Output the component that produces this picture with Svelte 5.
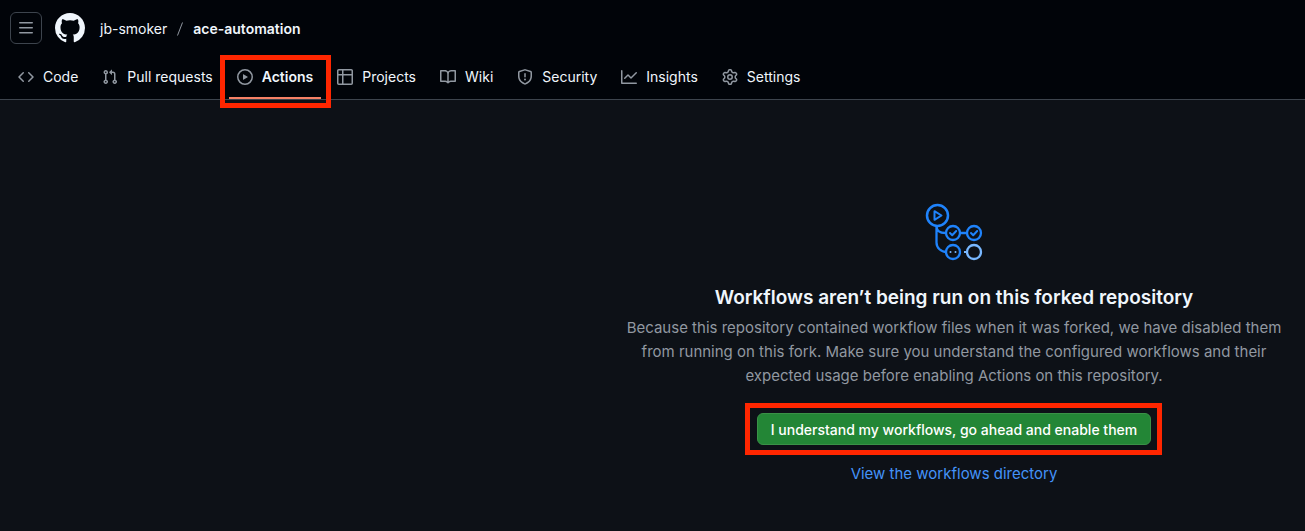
<script>
  const tabs = [
    { name: 'Code', icon: 'm11.28 3.22 4.25 4.25a.75.75 0 0 1 0 1.06l-4.25 4.25a.749.749 0 0 1-1.275-.326.749.749 0 0 1 .215-.734L13.94 8l-3.72-3.72a.749.749 0 0 1 .326-1.275.749.749 0 0 1 .734.215Zm-6.56 0a.751.751 0 0 1 1.042.018.751.751 0 0 1 .018 1.042L2.06 8l3.72 3.72a.749.749 0 0 1-.326 1.275.749.749 0 0 1-.734-.215L.47 8.53a.75.75 0 0 1 0-1.06Z' },
    { name: 'Pull requests', icon: 'M1.5 3.25a2.25 2.25 0 1 1 3 2.122v5.256a2.251 2.251 0 1 1-1.5 0V5.372A2.25 2.25 0 0 1 1.5 3.25Zm5.677-.177L9.573.677A.25.25 0 0 1 10 .854V2.5h1A2.5 2.5 0 0 1 13.5 5v5.628a2.251 2.251 0 1 1-1.5 0V5a1 1 0 0 0-1-1h-1v1.646a.25.25 0 0 1-.427.177L7.177 3.427a.25.25 0 0 1 0-.354ZM3.75 2.5a.75.75 0 1 0 0 1.5.75.75 0 0 0 0-1.5Zm0 9.5a.75.75 0 1 0 0 1.5.75.75 0 0 0 0-1.5Zm8.25.75a.75.75 0 1 0 1.5 0 .75.75 0 0 0-1.5 0Z' },
    { name: 'Actions', current: true, icon: 'M8 0a8 8 0 1 1 0 16A8 8 0 0 1 8 0ZM1.5 8a6.5 6.5 0 1 0 13 0 6.5 6.5 0 0 0-13 0Zm4.879-2.773 4.264 2.559a.25.25 0 0 1 0 .428l-4.264 2.559A.25.25 0 0 1 6 10.559V5.442a.25.25 0 0 1 .379-.215Z' },
    { name: 'Projects', icon: 'M0 1.75C0 .784.784 0 1.75 0h12.5C15.216 0 16 .784 16 1.75v12.5A1.75 1.75 0 0 1 14.25 16H1.75A1.75 1.75 0 0 1 0 14.25ZM6.5 6.5v8h7.75a.25.25 0 0 0 .25-.25V6.5Zm8-1.5V1.75a.25.25 0 0 0-.25-.25H6.5V5Zm-13 1.5v7.75c0 .138.112.25.25.25H5v-8ZM5 5V1.5H1.75a.25.25 0 0 0-.25.25V5Z' },
    { name: 'Wiki', icon: 'M0 1.75A.75.75 0 0 1 .75 1h4.253c1.227 0 2.317.59 3 1.501A3.743 3.743 0 0 1 11.006 1h4.245a.75.75 0 0 1 .75.75v10.5a.75.75 0 0 1-.75.75h-4.507a2.25 2.25 0 0 0-1.591.659l-.622.621a.75.75 0 0 1-1.06 0l-.622-.621A2.25 2.25 0 0 0 5.258 13H.75a.75.75 0 0 1-.75-.75Zm7.251 10.324.004-5.073-.002-2.253A2.25 2.25 0 0 0 5.003 2.5H1.5v9h3.757a3.75 3.75 0 0 1 1.994.574ZM8.755 4.75l-.004 7.322a3.752 3.752 0 0 1 1.992-.572H14.5v-9h-3.495a2.25 2.25 0 0 0-2.25 2.25Z' },
    { name: 'Security', icon: 'M7.467.133a1.748 1.748 0 0 1 1.066 0l5.25 1.68A1.75 1.75 0 0 1 15 3.48V7c0 1.566-.32 3.182-1.303 4.682-.983 1.498-2.585 2.813-5.032 3.855a1.697 1.697 0 0 1-1.33 0c-2.447-1.042-4.049-2.357-5.032-3.855C1.32 10.182 1 8.566 1 7V3.48a1.75 1.75 0 0 1 1.217-1.667Zm.61 1.429a.25.25 0 0 0-.153 0l-5.25 1.68a.25.25 0 0 0-.174.238V7c0 1.358.275 2.666 1.057 3.86.784 1.194 2.121 2.34 4.366 3.297a.196.196 0 0 0 .154 0c2.245-.956 3.582-2.104 4.366-3.298C13.225 9.666 13.5 8.36 13.5 7V3.48a.251.251 0 0 0-.174-.237l-5.25-1.68ZM8.75 4.75v3a.75.75 0 0 1-1.5 0v-3a.75.75 0 0 1 1.5 0ZM9 10.5a1 1 0 1 1-2 0 1 1 0 0 1 2 0Z' },
    { name: 'Insights', icon: 'M1.5 1.75V13.5h13.75a.75.75 0 0 1 0 1.5H.75a.75.75 0 0 1-.75-.75V1.75a.75.75 0 0 1 1.5 0Zm14.28 2.53-5.25 5.25a.75.75 0 0 1-1.06 0L7 7.06 4.28 9.78a.751.751 0 0 1-1.042-.018.751.751 0 0 1-.018-1.042l3.25-3.25a.75.75 0 0 1 1.06 0L10 7.94l4.72-4.72a.751.751 0 0 1 1.042.018.751.751 0 0 1 .018 1.042Z' },
    { name: 'Settings', icon: 'M8 0a8.2 8.2 0 0 1 .701.031C9.444.095 9.99.645 10.16 1.29l.288 1.107c.018.066.079.158.212.224.231.114.454.243.668.386.123.082.233.09.299.071l1.103-.303c.644-.176 1.392.021 1.82.63.27.385.506.792.704 1.218.315.675.111 1.422-.364 1.891l-.814.806c-.049.048-.098.147-.088.294.016.257.016.515 0 .772-.01.147.038.246.088.294l.814.806c.475.469.679 1.216.364 1.891a7.977 7.977 0 0 1-.704 1.217c-.428.61-1.176.807-1.82.63l-1.102-.302c-.067-.019-.177-.011-.3.071a5.909 5.909 0 0 1-.668.386c-.133.066-.194.158-.211.224l-.29 1.106c-.168.646-.715 1.196-1.458 1.26a8.006 8.006 0 0 1-1.402 0c-.743-.064-1.289-.614-1.458-1.26l-.289-1.106c-.018-.066-.079-.158-.212-.224a5.738 5.738 0 0 1-.668-.386c-.123-.082-.233-.09-.299-.071l-1.103.303c-.644.176-1.392-.021-1.82-.63a8.12 8.12 0 0 1-.704-1.218c-.315-.675-.111-1.422.363-1.891l.815-.806c.05-.048.098-.147.088-.294a6.214 6.214 0 0 1 0-.772c.01-.147-.038-.246-.088-.294l-.815-.806C.635 6.045.431 5.298.746 4.623a7.92 7.92 0 0 1 .704-1.217c.428-.61 1.176-.807 1.82-.63l1.102.302c.067.019.177.011.3-.071.214-.143.437-.272.668-.386.133-.066.194-.158.211-.224l.29-1.106C6.009.645 6.556.095 7.299.03 7.53.01 7.764 0 8 0Zm-.571 1.525c-.036.003-.108.036-.137.146l-.289 1.105c-.147.561-.549.967-.998 1.189-.173.086-.34.183-.5.29-.417.278-.97.423-1.529.27l-1.103-.303c-.109-.03-.175.016-.195.045-.22.312-.412.644-.573.99-.014.031-.021.11.059.19l.815.806c.411.406.562.957.53 1.456a4.709 4.709 0 0 0 0 .582c.032.499-.119 1.05-.53 1.456l-.815.806c-.081.08-.073.159-.059.19.162.346.353.677.573.989.02.03.085.076.195.046l1.102-.303c.56-.153 1.113-.008 1.53.27.161.107.328.204.501.29.447.222.85.629.997 1.189l.289 1.105c.029.109.101.143.137.146a6.6 6.6 0 0 0 1.142 0c.036-.003.108-.036.137-.146l.289-1.105c.147-.561.549-.967.998-1.189.173-.086.34-.183.5-.29.417-.278.97-.423 1.529-.27l1.103.303c.109.029.175-.016.195-.045.22-.313.411-.644.573-.99.014-.031.021-.11-.059-.19l-.815-.806c-.411-.406-.562-.957-.53-1.456a4.709 4.709 0 0 0 0-.582c-.032-.499.119-1.05.53-1.456l.815-.806c.081-.08.073-.159.059-.19a6.464 6.464 0 0 0-.573-.989c-.02-.03-.085-.076-.195-.046l-1.102.303c-.56.153-1.113.008-1.53-.27a4.44 4.44 0 0 0-.501-.29c-.447-.222-.85-.629-.997-1.189l-.289-1.105c-.029-.11-.101-.143-.137-.146a6.6 6.6 0 0 0-1.142 0ZM11 8a3 3 0 1 1-6 0 3 3 0 0 1 6 0ZM9.5 8a1.5 1.5 0 1 0-3.001.001A1.5 1.5 0 0 0 9.5 8Z' }
  ];
</script>

<header>
  <div class="context">
    <button class="menu" type="button" aria-label="Open menu">
      <svg viewBox="0 0 16 16" width="16" height="16" aria-hidden="true">
        <path d="M1 2.75A.75.75 0 0 1 1.75 2h12.5a.75.75 0 0 1 0 1.5H1.75A.75.75 0 0 1 1 2.75Zm0 5A.75.75 0 0 1 1.75 7h12.5a.75.75 0 0 1 0 1.5H1.75A.75.75 0 0 1 1 7.75ZM1.75 12h12.5a.75.75 0 0 1 0 1.5H1.75a.75.75 0 0 1 0-1.5Z" />
      </svg>
    </button>
    <a class="home" href="#home" aria-label="Homepage">
      <svg viewBox="0 0 16 16" width="30" height="30" aria-hidden="true">
        <path d="M8 0c4.42 0 8 3.58 8 8a8.013 8.013 0 0 1-5.45 7.59c-.4.08-.55-.17-.55-.38 0-.27.01-1.13.01-2.2 0-.75-.25-1.23-.54-1.48 1.78-.2 3.65-.88 3.65-3.95 0-.88-.31-1.59-.82-2.15.08-.2.36-1.02-.08-2.12 0 0-.67-.22-2.2.82-.64-.18-1.32-.27-2-.27-.68 0-1.36.09-2 .27-1.53-1.03-2.2-.82-2.2-.82-.44 1.1-.16 1.92-.08 2.12-.51.56-.82 1.28-.82 2.15 0 3.06 1.86 3.75 3.64 3.95-.23.2-.44.55-.51 1.07-.46.21-1.61.55-2.33-.66-.15-.24-.6-.83-1.23-.82-.67.01-.27.38.01.53.34.19.73.9.82 1.13.16.45.68 1.31 2.69.94 0 .67.01 1.3.01 1.49 0 .21-.15.45-.55.38A7.995 7.995 0 0 1 0 8c0-4.42 3.58-8 8-8Z" />
      </svg>
    </a>
    <div class="crumbs">
      <a href="#owner">jb-smoker</a>
      <svg class="slash" viewBox="0 0 6 14" width="6" height="14" aria-hidden="true"><path d="M5.5.5 .5 13.5" /></svg>
      <a class="repo" href="#repo">ace-automation</a>
    </div>
  </div>
  <nav aria-label="Repository">
    {#each tabs as tab}
      <a class="tab" class:current={tab.current} href="#{tab.name}" aria-current={tab.current ? 'page' : undefined}>
        <svg viewBox="0 0 16 16" width="16" height="16" aria-hidden="true"><path d={tab.icon} fill-rule="evenodd" /></svg>
        <span>{tab.name}</span>
      </a>
    {/each}
  </nav>
</header>

<main>
  <section class="blank">
    <svg class="flow" viewBox="0 0 58 58" width="58" height="58" aria-hidden="true">
      <g fill="none" stroke="#1f83fb" stroke-width="2.3">
        <circle cx="12.5" cy="12.5" r="10.5" stroke-width="2.5" />
        <path d="M9.5 8.2v8.6l7-4.3z" stroke-width="2" stroke-linejoin="round" />
        <path d="M11.5 23v16.5a10 9.5 0 0 0 10 9.5M11.5 23c0 4.5 3 7 9 7M35 30h7" />
        <circle cx="28" cy="30" r="7" />
        <circle cx="49" cy="30" r="7" />
        <circle cx="28" cy="49" r="7" />
        <path d="m25 30 2.2 2.2 4-4.2M46 30l2.2 2.2 4-4.2" stroke-width="2" stroke-linecap="round" stroke-linejoin="round" />
      </g>
      <g fill="#79b8ff"><circle cx="25.5" cy="49" r="1" /><circle cx="30.500" cy="49" r="1" /></g>
      <path d="M39 49h3" stroke="#79b8ff" stroke-width="2" />
      <circle cx="49" cy="49" r="7" fill="none" stroke="#79b8ff" stroke-width="2.3" />
    </svg>
    <h1>Workflows aren’t being run on this forked repository</h1>
    <p>Because this repository contained workflow files when it was forked, we have disabled them from running on this fork. Make sure you understand the configured workflows and their expected usage before enabling Actions on this repository.</p>
    <div class="action">
      <button class="enable" type="button">I understand my workflows, go ahead and enable them</button>
    </div>
    <a class="directory" href="#workflows">View the workflows directory</a>
  </section>
</main>

<style>
  :global(body) {
    margin: 0;
    min-height: 100vh;
    background: #0d1117;
    color: #f0f6fc;
    font: 14px/20px Inter, "Liberation Sans", sans-serif;
  }
  a {
    color: inherit;
    text-decoration: none;
  }
  svg {
    display: block;
    flex: none;
    fill: currentColor;
  }
  header {
    background: #010409;
    border-bottom: 1px solid #3d444d;
  }
  .context {
    display: flex;
    align-items: center;
    gap: 13px;
    padding: 12px 10px;
  }
  .menu {
    display: grid;
    place-items: center;
    width: 32px;
    height: 32px;
    padding: 0;
    border: 1px solid #3d444d;
    border-radius: 6px;
    background: transparent;
    color: #9198a1;
  }
  .crumbs {
    display: flex;
    align-items: center;
    gap: 10px;
    padding: 2px 2px 0;
  }
  .slash {
    fill: none;
    stroke: #9198a1;
  }
  .repo {
    font-weight: 600;
  }
  nav {
    display: flex;
    gap: 8px;
    padding: 0 10px;
  }
  .tab {
    position: relative;
    display: flex;
    align-items: center;
    gap: 9px;
    box-sizing: border-box;
    height: 43px;
    padding: 0 8px 2px;
    white-space: nowrap;
  }
  .tab svg {
    color: #9198a1;
  }
  .current {
    font-weight: 600;
    box-shadow: inset 0 -2px #f78166;
  }
  .current::after,
  .action::after {
    content: "";
    position: absolute;
    border: 5px solid #ff2600;
    pointer-events: none;
  }
  .current::after {
    inset: -1px -10px -9px -9px;
    z-index: 1;
  }
  main {
    display: flex;
    justify-content: flex-end;
  }
  .blank {
    display: flex;
    flex-direction: column;
    align-items: center;
    box-sizing: border-box;
    width: 100%;
    max-width: 702px;
    padding: 103px 16px 32px;
    text-align: center;
    font-size: 15px;
    line-height: 24px;
  }
  h1 {
    margin: 22px 0 0;
    font-size: 19px;
    line-height: 30px;
    font-weight: 600;
  }
  p {
    margin: 3px 0 25px;
    color: #9198a1;
  }
  .action {
    position: relative;
    margin-bottom: 17px;
  }
  .action::after {
    inset: -10px -11px -10px -12px;
  }
  .enable {
    display: block;
    height: 32px;
    padding: 2px 13px 0;
    border: 1px solid #3a9147;
    border-radius: 6px;
    background: #238636;
    color: #fff;
    font: 500 14px/20px Inter, "Liberation Sans", sans-serif;
  }
  .directory {
    color: #4493f8;
  }
</style>
